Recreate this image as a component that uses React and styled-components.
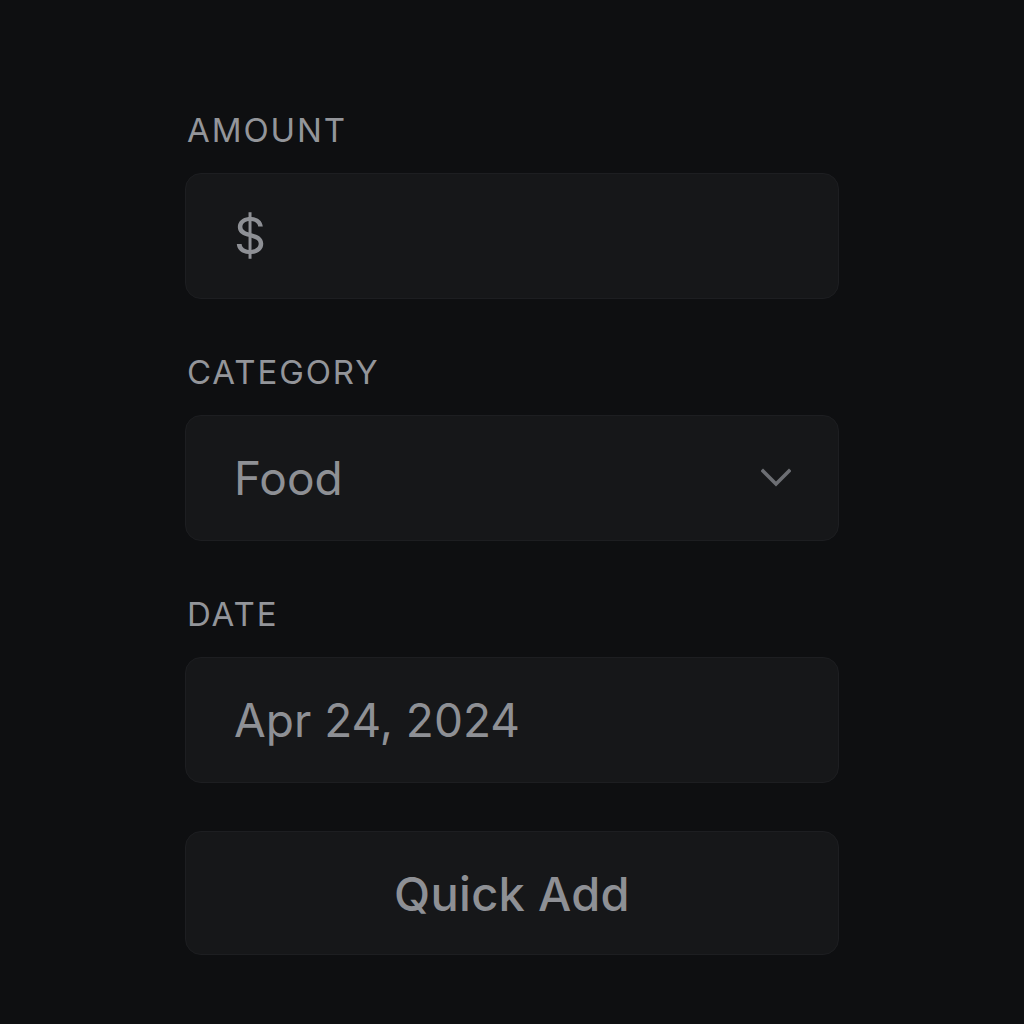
import React from "react";
import styled, { createGlobalStyle } from "styled-components";

const GlobalStyle = createGlobalStyle`
    html, body {
        margin: 0;
        padding: 0;
        background: #0e0f11;
    }
    body {
        font-family: Inter, "Noto Sans", "Liberation Sans", sans-serif;
        -webkit-font-smoothing: antialiased;
    }
`;

const Page = styled.div`
    min-height: 1024px;
    background: #0e0f11;
    display: flex;
    justify-content: center;
    padding-top: 114px;
    box-sizing: border-box;
`;

const Form = styled.form`
    width: 654px;
    display: flex;
    flex-direction: column;
`;

const Group = styled.div`
    display: flex;
    flex-direction: column;
    margin-bottom: 57px;
`;

const Label = styled.label`
    font-size: 33px;
    line-height: 1;
    font-weight: 400;
    letter-spacing: 1.9px;
    color: #93959a;
    margin: 0 0 26px 2px;
    text-transform: uppercase;
`;

const Field = styled.div`
    height: 126px;
    box-sizing: border-box;
    background: #161719;
    border: 1px solid #1d1e21;
    border-radius: 16px;
    display: flex;
    align-items: center;
    justify-content: space-between;
    padding: 0 47px 0 48px;
    color: #8e9095;
    font-size: 46px;
    font-weight: 400;
`;

const Value = styled.span`
    line-height: 1;
    font-size: ${(p) => (p.$big ? "50px" : "inherit")};
`;

const Button = styled.button`
    height: 124px;
    margin-top: -9px;
    box-sizing: border-box;
    background: #161719;
    border: 1px solid #1d1e21;
    border-radius: 16px;
    color: #8e9095;
    font-family: inherit;
    font-size: 47px;
    font-weight: 500;
    letter-spacing: 0.3px;
    cursor: pointer;
`;

const Chevron = () => (
    <svg width="30" height="20" viewBox="0 0 30 20" fill="none">
        <polyline
            points="2,3 15,16 28,3"
            stroke="#6c6e73"
            strokeWidth="3.6"
            strokeLinecap="square"
            strokeLinejoin="miter"
        />
    </svg>
);

export default function App() {
    return (
        <>
            <GlobalStyle />
            <Page>
                <Form onSubmit={(e) => e.preventDefault()}>
                    <Group>
                        <Label>Amount</Label>
                        <Field>
                            <Value $big>$</Value>
                        </Field>
                    </Group>
                    <Group>
                        <Label>Category</Label>
                        <Field>
                            <Value>Food</Value>
                            <Chevron />
                        </Field>
                    </Group>
                    <Group>
                        <Label>Date</Label>
                        <Field>
                            <Value>Apr 24, 2024</Value>
                        </Field>
                    </Group>
                    <Button type="submit">Quick Add</Button>
                </Form>
            </Page>
        </>
    );
}
